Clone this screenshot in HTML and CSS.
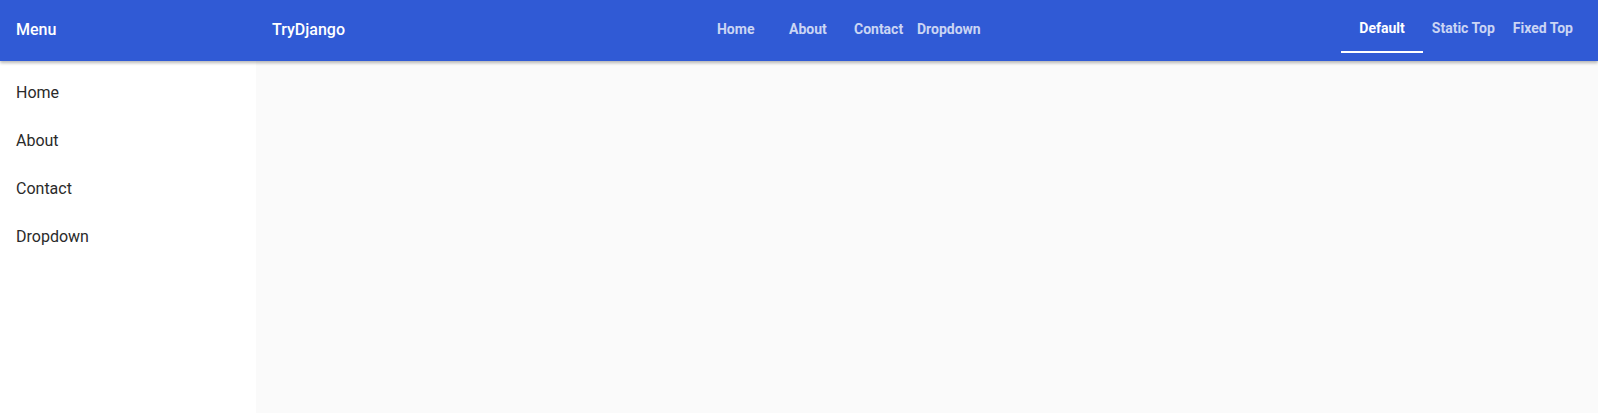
FILE: index.html
```html
<!DOCTYPE html>
<html>
<head>
<meta charset="utf-8">
<title>TryDjango</title>
<link rel="stylesheet" href="styles.css">
</head>
<body>
<header class="topbar">
  <div class="topbar__menu">Menu</div>
  <div class="topbar__brand">TryDjango</div>
  <nav class="topbar__nav">
    <a href="#" class="topbar__link">Home</a>
    <a href="#" class="topbar__link">About</a>
    <a href="#" class="topbar__link">Contact</a>
    <a href="#" class="topbar__link">Dropdown</a>
  </nav>
  <div class="topbar__tabs">
    <a href="#" class="tab tab--active">Default</a>
    <a href="#" class="tab">Static Top</a>
    <a href="#" class="tab">Fixed Top</a>
  </div>
</header>
<div class="layout">
  <aside class="sidebar">
    <a href="#" class="sidebar__item">Home</a>
    <a href="#" class="sidebar__item">About</a>
    <a href="#" class="sidebar__item">Contact</a>
    <a href="#" class="sidebar__item">Dropdown</a>
  </aside>
  <main class="content"></main>
</div>
</body>
</html>
```
FILE: styles.css
```css
*,
*::before,
*::after {
  box-sizing: border-box;
}

html, body {
  height: 100%;
}

body {
  margin: 0;
  font-family: Roboto, "Helvetica Neue", Arial, sans-serif;
  background: #fafafa;
  display: flex;
  flex-direction: column;
  overflow: hidden;
}

a {
  text-decoration: none;
  color: inherit;
}

.topbar {
  position: relative;
  z-index: 2;
  display: flex;
  align-items: stretch;
  height: 61px;
  background: #305ad5;
  color: #fff;
  box-shadow: 0 2px 3px rgba(0, 0, 0, 0.28);
}

.topbar__menu {
  width: 256px;
  padding: 0 0 2px 16px;
  display: flex;
  align-items: center;
  font-size: 16px;
  font-weight: 500;
}

.topbar__brand {
  padding: 0 0 2px 16px;
  display: flex;
  align-items: center;
  font-size: 16px;
  font-weight: 500;
}

.topbar__nav {
  display: flex;
  align-items: center;
  margin-left: 372px;
  padding-bottom: 3px;
}

.topbar__link {
  width: 72px;
  font-size: 14px;
  font-weight: 700;
  color: rgba(255, 255, 255, 0.76);
}

.topbar__link:nth-child(2) { width: 65px; }
.topbar__link:nth-child(3) { width: 63px; }
.topbar__link:last-child { width: auto; }

.topbar__tabs {
  margin-left: auto;
  margin-right: 16px;
  display: flex;
  align-items: stretch;
  height: 53px;
}

.tab {
  display: flex;
  align-items: center;
  padding: 5px 9px 0;
  font-size: 14px;
  font-weight: 700;
  color: rgba(255, 255, 255, 0.76);
  border-bottom: 2px solid transparent;
}

.tab--active {
  color: #fff;
  padding: 5px 18px 0;
  border-bottom-color: #fff;
}

.layout {
  flex: 1;
  display: flex;
}

.sidebar {
  width: 256px;
  background: #fff;
  padding-top: 20px;
  display: flex;
  flex-direction: column;
}

.sidebar__item {
  height: 48px;
  padding-left: 16px;
  font-size: 16px;
  color: #2a2a2a;
  line-height: 24px;
}

.content {
  flex: 1;
  background: #fafafa;
}
```
